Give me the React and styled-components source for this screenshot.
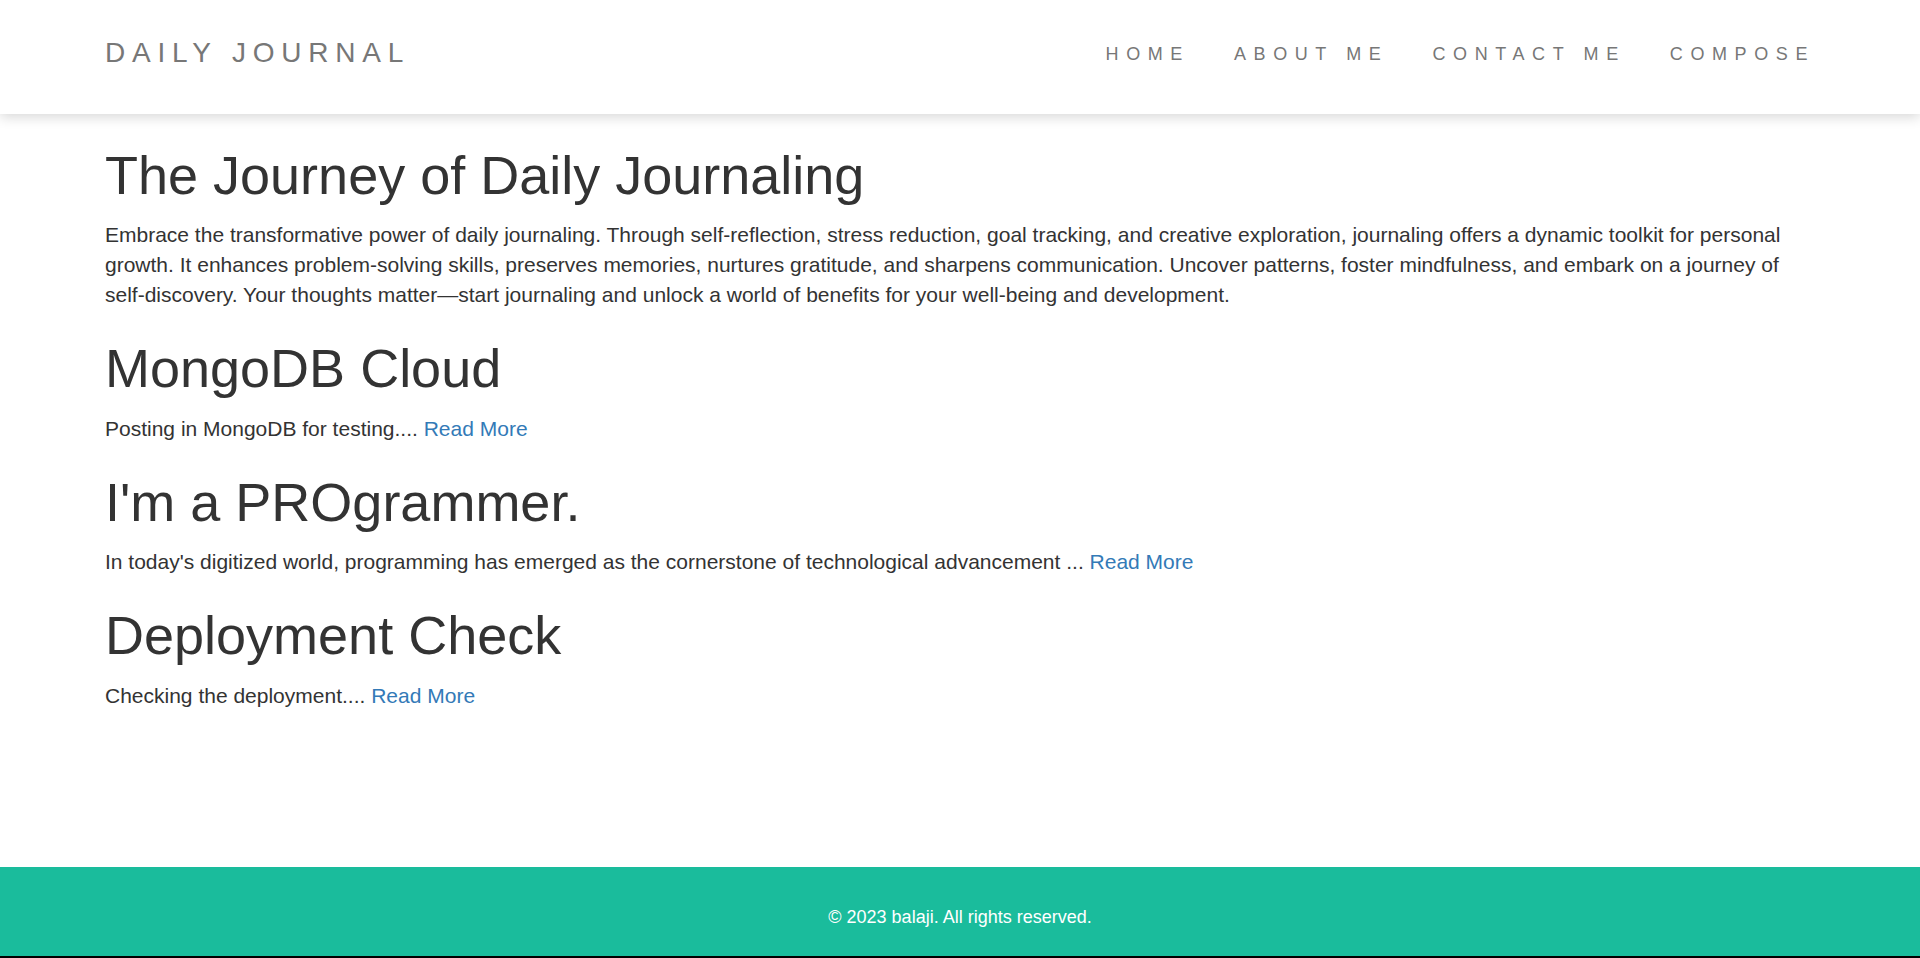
import React from 'react';
import styled, { createGlobalStyle } from 'styled-components';

const GlobalStyle = createGlobalStyle`
  html, body {
    margin: 0;
    padding: 0;
    background: #fff;
  }
  body {
    font-family: "Liberation Sans", Arial, Helvetica, sans-serif;
    color: #333;
  }
`;

const Page = styled.div`
  display: flex;
  flex-direction: column;
  min-height: 100vh;
`;

const Navbar = styled.header`
  display: flex;
  justify-content: space-between;
  align-items: center;
  height: 114px;
  box-sizing: border-box;
  padding: 0 105px 8px;
  background: #fff;
  box-shadow: 0 3px 12px rgba(0, 0, 0, 0.16);
  position: relative;
  z-index: 1;
`;

const Brand = styled.a`
  color: #777;
  font-size: 28px;
  letter-spacing: 6.8px;
  text-decoration: none;
`;

const NavList = styled.nav`
  display: flex;
  gap: 44px;
  padding-top: 2px;
`;

const NavLink = styled.a`
  color: #777;
  font-size: 18px;
  letter-spacing: 7.6px;
  text-decoration: none;
`;

const Main = styled.main`
  flex: 1;
  padding: 3px 105px 40px;
`;

const Title = styled.h1`
  font-size: 54px;
  font-weight: 400;
  line-height: 1.1;
  margin: 29px 0 15px;
  color: #333;
`;

const Text = styled.p`
  font-size: 21px;
  line-height: 30px;
  margin: 0 0 10px;
`;

const ReadMore = styled.a`
  color: #337ab7;
  text-decoration: none;
`;

const Footer = styled.footer`
  background: #1abc9c;
  color: #fff;
  text-align: center;
  font-size: 18px;
  padding: 40px 0 28px;
  border-bottom: 2px solid #000;
`;

const posts = [
  {
    title: 'MongoDB Cloud',
    body: 'Posting in MongoDB for testing....',
  },
  {
    title: "I'm a PROgrammer.",
    body: "In today's digitized world, programming has emerged as the cornerstone of technological advancement ...",
  },
  {
    title: 'Deployment Check',
    body: 'Checking the deployment....',
  },
];

export default function App() {
  return (
    <Page>
      <GlobalStyle />
      <Navbar>
        <Brand href="#">DAILY JOURNAL</Brand>
        <NavList>
          <NavLink href="#">HOME</NavLink>
          <NavLink href="#">ABOUT ME</NavLink>
          <NavLink href="#">CONTACT ME</NavLink>
          <NavLink href="#">COMPOSE</NavLink>
        </NavList>
      </Navbar>
      <Main>
        <Title>The Journey of Daily Journaling</Title>
        <Text>
          Embrace the transformative power of daily journaling. Through self-reflection, stress reduction, goal tracking, and creative exploration, journaling offers a dynamic toolkit for personal growth. It enhances problem-solving skills, preserves memories, nurtures gratitude, and sharpens communication. Uncover patterns, foster mindfulness, and embark on a journey of self-discovery. Your thoughts matter—start journaling and unlock a world of benefits for your well-being and development.
        </Text>
        {posts.map((post) => (
          <React.Fragment key={post.title}>
            <Title>{post.title}</Title>
            <Text>
              {post.body} <ReadMore href="#">Read More</ReadMore>
            </Text>
          </React.Fragment>
        ))}
      </Main>
      <Footer>© 2023 balaji. All rights reserved.</Footer>
    </Page>
  );
}
